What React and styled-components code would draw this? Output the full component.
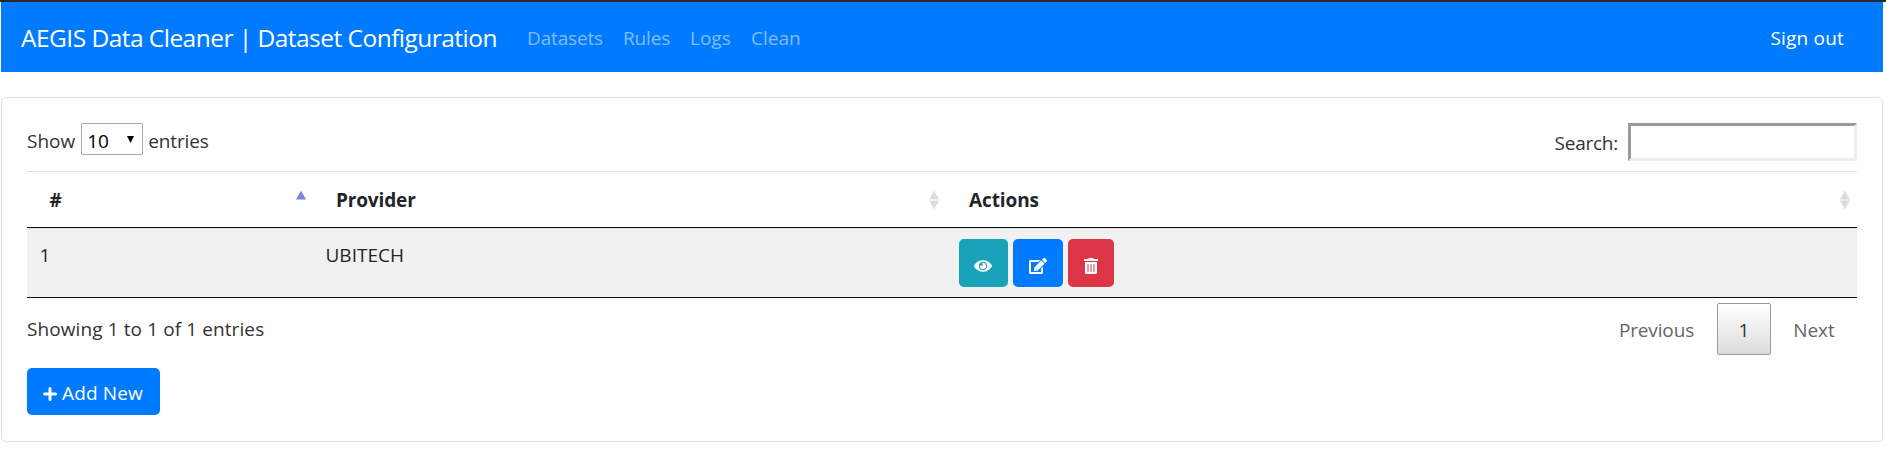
import React from "react";
import styled, { createGlobalStyle } from "styled-components";
import { FaEdit, FaTrashAlt } from "react-icons/fa";

const GlobalStyle = createGlobalStyle`
  *, *::before, *::after { box-sizing: border-box; }
  body {
    margin: 0;
    background: #fff;
    color: #212529;
    font-family: "Open Sans", "Noto Sans", sans-serif;
    font-size: 19px;
    line-height: 30px;
  }
`;

const Page = styled.div`
  border-top: 2px solid #26292c;
  padding-right: 3px;
  padding-left: 1px;
  height: 457px;
`;

const Navbar = styled.nav`
  display: flex;
  align-items: center;
  height: 70px;
  padding: 2px 39px 0 20px;
  background: #007bff;
`;

const Label = styled.span`
  display: inline-block;
  white-space: nowrap;
  letter-spacing: ${(p) => p.$spacing || 0}px;
`;

const Brand = styled(Label)`
  width: 506px;
  font-size: 24.5px;
  line-height: 38px;
  color: #fff;
`;

const NavLinks = styled.div`
  display: flex;
  flex: 1;
`;

const NavLink = styled(Label)`
  width: ${(p) => p.$width}px;
  color: rgba(255, 255, 255, 0.5);
`;

const SignOut = styled(Label)`
  color: #fff;
`;

const Card = styled.main`
  display: flex;
  flex-direction: column;
  height: 345px;
  margin-top: 25px;
  padding: 25px;
  border: 1px solid #dfdfdf;
  border-radius: 5px;
`;

const Toolbar = styled.div`
  display: flex;
  justify-content: space-between;
  height: 48px;
  color: #333;
`;

const LengthControl = styled.label`
  display: flex;
  align-items: center;
  height: 36px;
`;

const SelectBox = styled.span`
  display: flex;
  align-items: center;
  justify-content: space-between;
  width: 62px;
  height: 32px;
  margin: -4px 5px 0 6px;
  padding: 3px 8px 0 5px;
  border: 1px solid #a9a9a9;
  border-radius: 1px;
  color: #000;
`;

const SelectArrow = styled.svg`
  width: 7px;
  height: 7px;
  margin-top: -3px;
`;

const SearchControl = styled.label`
  display: flex;
  align-items: center;
  gap: 10px;
  height: 38px;

  ${Label} {
    padding-top: 2px;
  }
`;

const SearchInput = styled.input`
  width: 229px;
  height: 38px;
  border: 3px solid;
  border-color: #9a9a9a #eee #eee #9a9a9a;
  outline: none;
  background: #fff;
`;

const Row = styled.div`
  display: grid;
  grid-template-columns: 286px 633px 911px;
`;

const HeadRow = styled(Row)`
  height: 57px;
  border-top: 1px solid #dee2e6;
  border-bottom: 1px solid #111;
`;

const HeadCell = styled.div`
  display: flex;
  align-items: center;
  justify-content: space-between;
  padding: 0 ${(p) => p.$end}px 0 ${(p) => p.$start}px;
  font-weight: 700;
`;

const BodyRow = styled(Row)`
  height: 70px;
  border-top: 1px solid #dee2e6;
  border-bottom: 1px solid #111;
  background: #f1f1f1;
`;

const Cell = styled.div`
  padding: 11px 12.5px;
`;

const Actions = styled.div`
  display: flex;
  align-items: flex-start;
  gap: 5px;
  padding: 10px 13px;
`;

const tones = { info: "#17a2b8", primary: "#007bff", danger: "#dc3545" };

const ActionButton = styled.button`
  display: flex;
  align-items: center;
  justify-content: center;
  width: ${(p) => p.$width}px;
  height: 48px;
  padding: 5px 1px 0 0;
  border: 0;
  border-radius: 5px;
  background: ${(p) => tones[p.$tone]};
  color: #fff;
`;

const Footer = styled.div`
  display: flex;
  justify-content: space-between;
  height: 70px;
  padding-top: 5px;
  color: #333;
`;

const Info = styled(Label)`
  padding-top: 11px;
`;

const Pagination = styled.div`
  display: flex;
  height: 52px;
`;

const PageButton = styled.span`
  display: flex;
  align-items: center;
  justify-content: center;
  width: ${(p) => p.$width}px;
  padding-top: 1px;
  border: 1px solid ${(p) => (p.$current ? "#979797" : "transparent")};
  border-radius: 2px;
  background: ${(p) => (p.$current ? "linear-gradient(#fff, #dcdcdc)" : "none")};
  color: ${(p) => (p.$current ? "#333" : "#666")};
`;

const AddButton = styled.button`
  display: flex;
  flex: none;
  align-items: center;
  gap: 5px;
  width: 133px;
  height: 47px;
  padding: 3px 0 0 16px;
  border: 0;
  border-radius: 5px;
  background: #007bff;
  color: #fff;
  font: inherit;
`;

function SortIcon({ ascending }) {
  return (
    <svg width="12" height="20" viewBox="0 0 12 20">
      <path d="M6 .5 11 9.5H1Z" fill={ascending ? "#7f84e0" : "#dcdcdc"} />
      {!ascending && <path d="M1 10.5H11L6 19.5Z" fill="#dcdcdc" />}
    </svg>
  );
}

function PlusIcon() {
  return (
    <svg width="14" height="16" viewBox="0 0 14 16" stroke="#fff" strokeWidth="3" strokeLinecap="round">
      <path d="M7 3.5V14.5M1.5 9H12.5" />
    </svg>
  );
}

function EyeIcon() {
  return (
    <svg width="18" height="16" viewBox="0 0 576 512" fill="currentColor">
      <path d="M569.354 231.631C512.969 135.949 407.81 72 288 72 168.14 72 63.004 135.994 6.646 231.631a47.999 47.999 0 0 0 0 48.739C63.031 376.051 168.19 440 288 440c119.86 0 224.996-63.994 281.354-159.631a47.997 47.997 0 0 0 0-48.738zM288 392c-75.162 0-136-60.827-136-136 0-75.162 60.826-136 136-136 75.162 0 136 60.826 136 136 0 75.162-60.826 136-136 136zm104-136c0 57.438-46.562 104-104 104s-104-46.562-104-104c0-17.708 4.431-34.379 12.236-48.973l-.001.032c0 23.651 19.173 42.823 42.824 42.823s42.824-19.173 42.824-42.823c0-23.651-19.173-42.824-42.824-42.824l-.032.001C253.621 156.431 270.292 152 288 152c57.438 0 104 46.562 104 104z" />
    </svg>
  );
}

export default function App() {
  return (
    <>
      <GlobalStyle />
      <Page>
        <Navbar>
          <Brand $spacing={-0.53}>AEGIS Data Cleaner | Dataset Configuration</Brand>
          <NavLinks>
            <NavLink $width={96} $spacing={-0.15}>Datasets</NavLink>
            <NavLink $width={67} $spacing={-0.15}>Rules</NavLink>
            <NavLink $width={61}>Logs</NavLink>
            <NavLink $width={60}>Clean</NavLink>
          </NavLinks>
          <SignOut $spacing={0.2}>Sign out</SignOut>
        </Navbar>
        <Card>
          <Toolbar>
            <LengthControl>
              <Label>Show</Label>
              <SelectBox>
                <Label>10</Label>
                <SelectArrow viewBox="0 0 8 8">
                  <path d="M0 0H8L4 8Z" />
                </SelectArrow>
              </SelectBox>
              <Label $spacing={-0.15}>entries</Label>
            </LengthControl>
            <SearchControl>
              <Label $spacing={-0.25}>Search:</Label>
              <SearchInput type="text" />
            </SearchControl>
          </Toolbar>
          <HeadRow>
            <HeadCell $start={22.5} $end={6}>
              <Label>#</Label>
              <SortIcon ascending />
            </HeadCell>
            <HeadCell $start={23} $end={6}>
              <Label $spacing={-0.15}>Provider</Label>
              <SortIcon />
            </HeadCell>
            <HeadCell $start={23} $end={6}>
              <Label $spacing={-0.1}>Actions</Label>
              <SortIcon />
            </HeadCell>
          </HeadRow>
          <BodyRow>
            <Cell>
              <Label>1</Label>
            </Cell>
            <Cell>
              <Label>UBITECH</Label>
            </Cell>
            <Actions>
              <ActionButton $tone="info" $width={49} aria-label="View">
                <EyeIcon />
              </ActionButton>
              <ActionButton $tone="primary" $width={50} aria-label="Edit">
                <FaEdit size={18} />
              </ActionButton>
              <ActionButton $tone="danger" $width={46} aria-label="Delete">
                <FaTrashAlt size={16} />
              </ActionButton>
            </Actions>
          </BodyRow>
          <Footer>
            <Info $spacing={0.1}>Showing 1 to 1 of 1 entries</Info>
            <Pagination>
              <PageButton $width={121}>
                <Label $spacing={-0.15}>Previous</Label>
              </PageButton>
              <PageButton $width={54} $current>
                <Label>1</Label>
              </PageButton>
              <PageButton $width={86}>
                <Label $spacing={-0.1}>Next</Label>
              </PageButton>
            </Pagination>
          </Footer>
          <AddButton>
            <PlusIcon />
            <Label $spacing={0.15}>Add New</Label>
          </AddButton>
        </Card>
      </Page>
    </>
  );
}
